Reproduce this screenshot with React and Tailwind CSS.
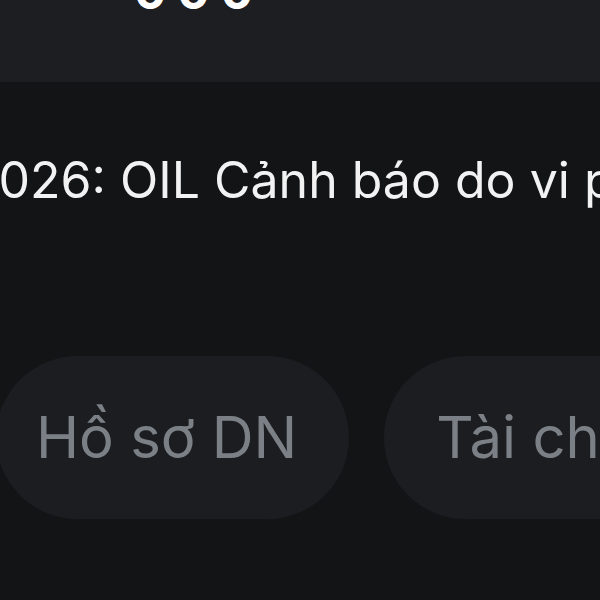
export default function App() {
  return (
    <div
      className="w-[600px] h-[600px] overflow-hidden bg-[#131416]"
      style={{ fontFamily: "Inter, 'Noto Sans', sans-serif" }}
    >
      {/* top bar */}
      <div className="h-[82px] bg-[#1d1e21] overflow-hidden">
        <div className="ml-[134px] -mt-[32px] text-[48px] font-bold leading-none tracking-[11px] text-white">
          000
        </div>
      </div>

      {/* notice line */}
      <div className="mt-[68px] -ml-[32px] whitespace-nowrap text-[50px] leading-[60px] text-[#f2f2f3]">
        2026: OIL Cảnh báo do vi phạm quy định
      </div>

      {/* chips */}
      <div className="mt-[146px] -ml-[4px] flex gap-[35px] whitespace-nowrap">
        <div className="h-[163px] shrink-0 rounded-full bg-[#1c1d20] pl-[40px] pr-[52px] flex items-center text-[58px] text-[#7b8087]">
          Hồ sơ DN
        </div>
        <div className="h-[163px] shrink-0 rounded-full bg-[#1c1d20] pl-[52px] pr-[52px] flex items-center text-[58px] text-[#7b8087]">
          Tài chính
        </div>
      </div>
    </div>
  );
}
